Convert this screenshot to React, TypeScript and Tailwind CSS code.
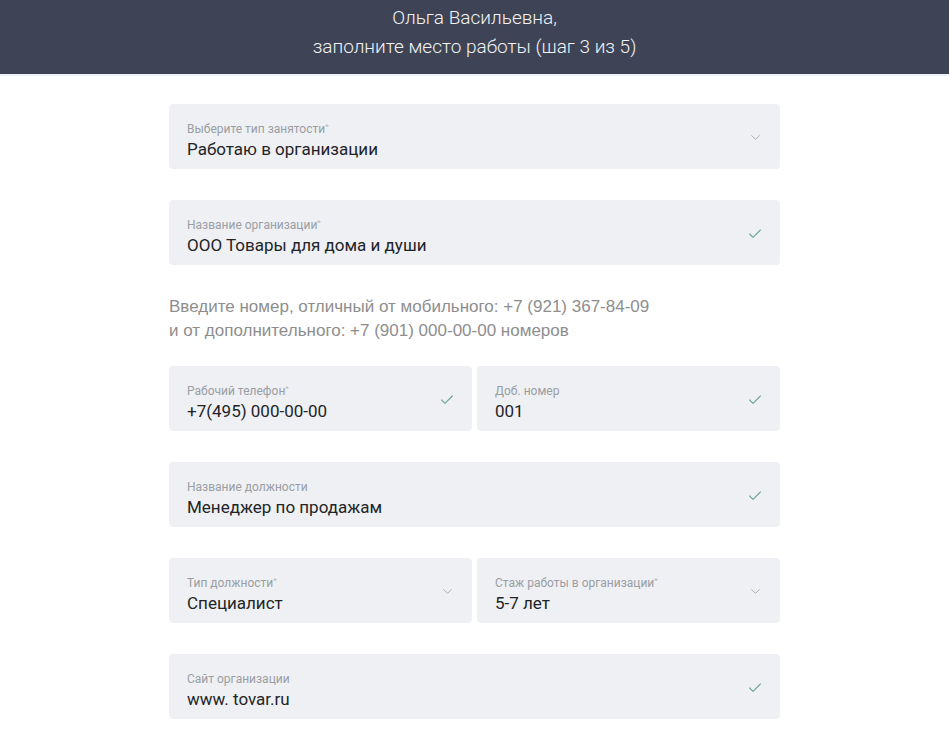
import { ChevronDown, Check } from "lucide-react";

type FieldProps = {
    label: string;
    value: string;
    required?: boolean;
    icon: "chevron" | "check";
    className?: string;
};

function Field({ label, value, required, icon, className }: FieldProps) {
    return (
        <div
            className={`flex h-[65px] items-center justify-between rounded-[4px] bg-[#eef0f3] pl-[18px] pr-[17px] ${className ?? ""}`}
        >
            <div className="flex flex-col pt-[8px]">
                <span className="text-[12px] leading-[14px] text-[#9a9ea4]">
                    {label}
                    {required && <sup className="text-[8px] text-[#b0b4ba]">*</sup>}
                </span>
                <span className="mt-[2px] text-[17px] leading-[22px] text-[#222428]">
                    {value}
                </span>
            </div>
            {icon === "chevron" ? (
                <ChevronDown className="mt-[2px] h-[15px] w-[15px] text-[#a6abb2]" strokeWidth={1.5} />
            ) : (
                <Check className="mt-[2px] h-[16px] w-[16px] text-[#6fa792]" strokeWidth={1.75} />
            )}
        </div>
    );
}

export default function App() {
    return (
        <main className="min-h-[739px] bg-white font-['Roboto',sans-serif]">
            <header className="flex h-[74px] flex-col items-center justify-center bg-[#3e4455] pb-[10px] text-[19px] font-light leading-[29px] text-[#f2f3f5]">
                <div>Ольга Васильевна,</div>
                <div>заполните место работы (шаг 3 из 5)</div>
            </header>
            <div className="h-[2px] bg-[#eef1f6]"></div>
            <div className="mx-auto flex w-[611px] flex-col pt-[28px]">
                <Field
                    label="Выберите тип занятости"
                    value="Работаю в организации"
                    required
                    icon="chevron"
                />
                <Field
                    className="mt-[31px]"
                    label="Название организации"
                    value="ООО Товары для дома и души"
                    required
                    icon="check"
                />
                <p className="mt-[30px] font-['Liberation_Sans',sans-serif] text-[17px] leading-[24px] text-[#8e8e8e]">
                    Введите номер, отличный от мобильного: +7 (921) 367-84-09
                    <br />и от дополнительного: +7 (901) 000-00-00 номеров
                </p>
                <div className="mt-[23px] grid grid-cols-2 gap-[5px]">
                    <Field
                        label="Рабочий телефон"
                        value="+7(495) 000-00-00"
                        required
                        icon="check"
                    />
                    <Field label="Доб. номер" value="001" icon="check" />
                </div>
                <Field
                    className="mt-[31px]"
                    label="Название должности"
                    value="Менеджер по продажам"
                    icon="check"
                />
                <div className="mt-[31px] grid grid-cols-2 gap-[5px]">
                    <Field
                        label="Тип должности"
                        value="Специалист"
                        required
                        icon="chevron"
                    />
                    <Field
                        label="Стаж работы в организации"
                        value="5-7 лет"
                        required
                        icon="chevron"
                    />
                </div>
                <Field
                    className="mt-[31px]"
                    label="Сайт организации"
                    value="www. tovar.ru"
                    icon="check"
                />
            </div>
        </main>
    );
}
